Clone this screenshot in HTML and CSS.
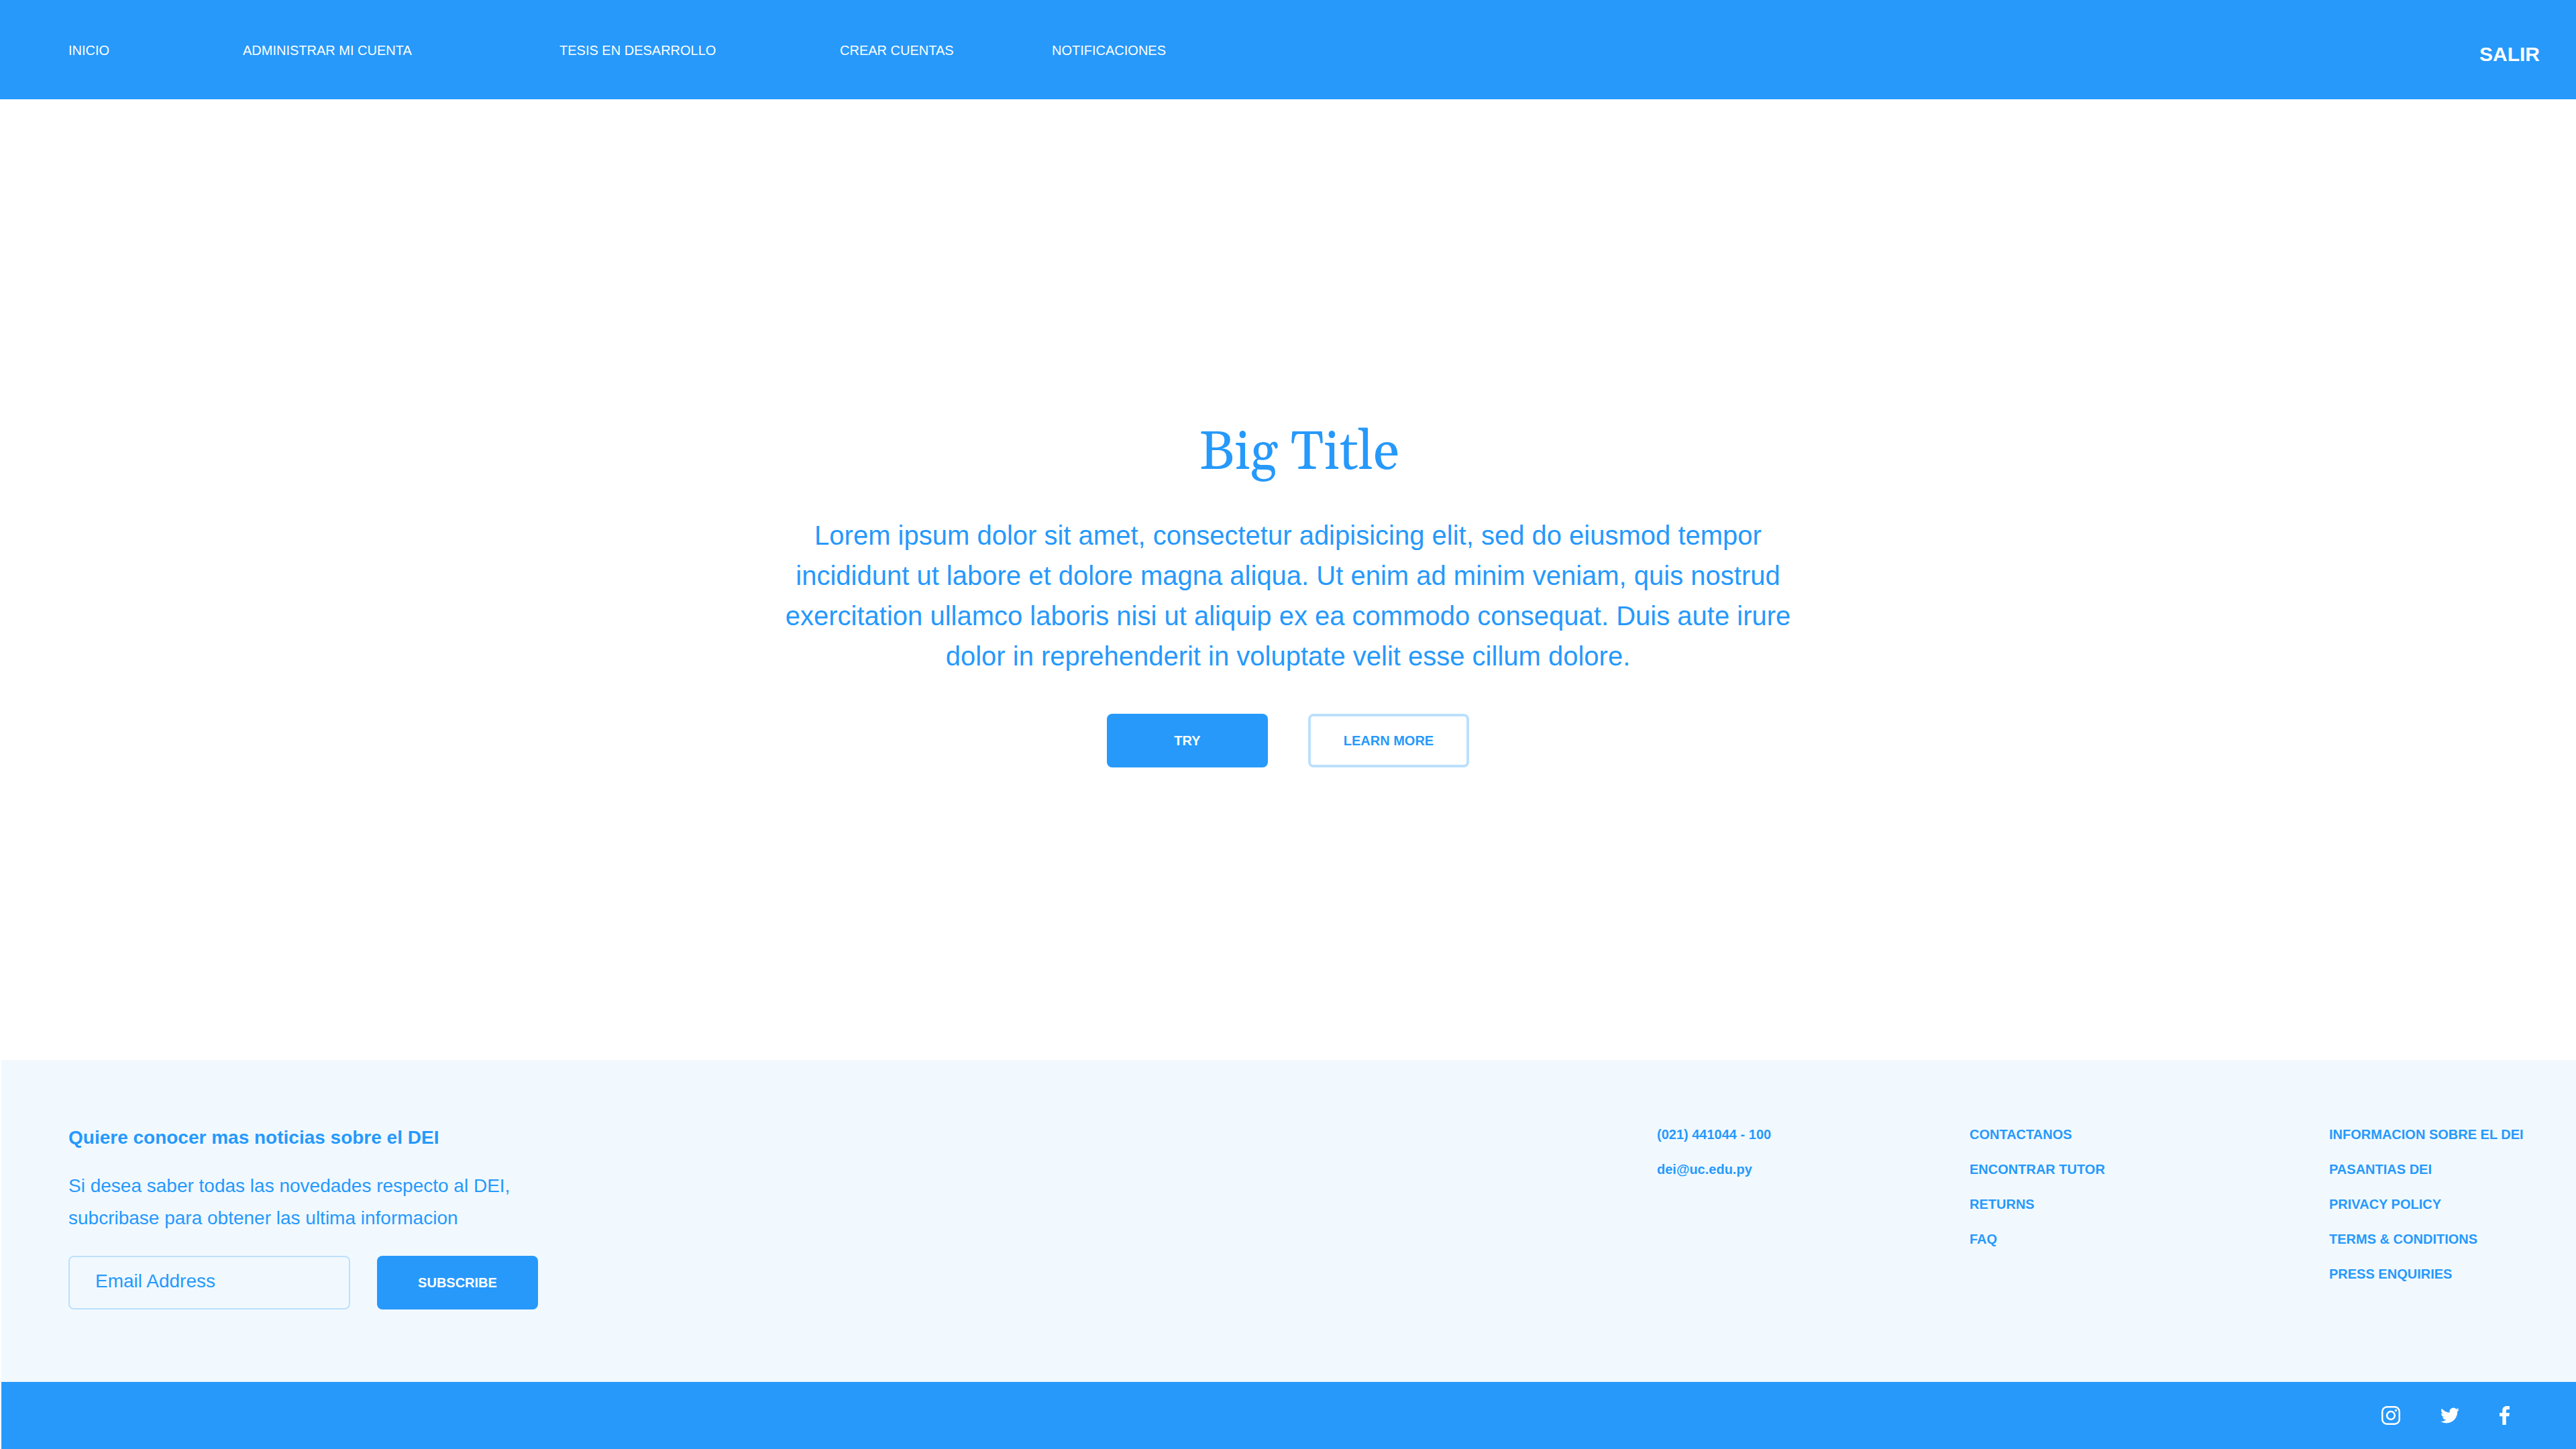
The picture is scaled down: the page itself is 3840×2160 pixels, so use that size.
FILE: index.html
```html
<!DOCTYPE html>
<html lang="es">
<head>
<meta charset="utf-8">
<meta name="viewport" content="width=device-width, initial-scale=1">
<title>DEI</title>
<link rel="stylesheet" href="styles.css">
</head>
<body>
<header class="header">
  <nav class="nav" aria-label="Principal">
    <a href="#">INICIO</a>
    <a href="#">ADMINISTRAR MI CUENTA</a>
    <a href="#">TESIS EN DESARROLLO</a>
    <a href="#">CREAR CUENTAS</a>
    <a href="#">NOTIFICACIONES</a>
  </nav>
  <a class="logout" href="#">SALIR</a>
</header>

<main class="hero">
  <h1 class="hero-title">Big Title</h1>
  <p class="hero-text">Lorem ipsum dolor sit amet, consectetur adipisicing elit, sed do eiusmod tempor incididunt ut labore et dolore magna aliqua. Ut enim ad minim veniam, quis nostrud exercitation ullamco laboris nisi ut aliquip ex ea commodo consequat. Duis aute irure dolor in reprehenderit in voluptate velit esse cillum dolore.</p>
  <div class="hero-actions">
    <button class="button" type="button">TRY</button>
    <button class="button button-outline" type="button">LEARN MORE</button>
  </div>
</main>

<footer class="footer">
  <div class="footer-main">
    <section class="newsletter">
      <h2 class="newsletter-title">Quiere conocer mas noticias sobre el DEI</h2>
      <p class="newsletter-text">Si desea saber todas las novedades respecto al DEI, subcribase para obtener las ultima informacion</p>
      <form class="newsletter-form">
        <input class="email" type="email" placeholder="Email Address" aria-label="Email Address">
        <button class="button" type="submit">SUBSCRIBE</button>
      </form>
    </section>
    <div class="links">
      <ul>
        <li><a href="tel:021441044">(021) 441044 - 100</a></li>
        <li><a href="mailto:dei@uc.edu.py">dei@uc.edu.py</a></li>
      </ul>
      <ul>
        <li><a href="#">CONTACTANOS</a></li>
        <li><a href="#">ENCONTRAR TUTOR</a></li>
        <li><a href="#">RETURNS</a></li>
        <li><a href="#">FAQ</a></li>
      </ul>
      <ul>
        <li><a href="#">INFORMACION SOBRE EL DEI</a></li>
        <li><a href="#">PASANTIAS DEI</a></li>
        <li><a href="#">PRIVACY POLICY</a></li>
        <li><a href="#">TERMS &amp; CONDITIONS</a></li>
        <li><a href="#">PRESS ENQUIRIES</a></li>
      </ul>
    </div>
  </div>
  <div class="social">
    <a href="#" aria-label="Instagram">
      <svg width="28" height="28" viewBox="0 0 28 28" fill="none" stroke="#fff">
        <rect x="1.25" y="1.25" width="25.5" height="25.5" rx="7" stroke-width="2.5"/>
        <circle cx="14" cy="14" r="5.9" stroke-width="2.5"/>
        <circle cx="21.5" cy="6.5" r="1.7" fill="#fff" stroke="none"/>
      </svg>
    </a>
    <a href="#" aria-label="Twitter">
      <svg width="28" height="28" viewBox="0 0 24 24" fill="#fff">
        <path d="M23.954 4.569a10 10 0 0 1-2.825.775 4.958 4.958 0 0 0 2.163-2.723c-.951.555-2.005.959-3.127 1.184a4.92 4.92 0 0 0-8.384 4.482C7.691 8.094 4.066 6.13 1.64 3.161a4.822 4.822 0 0 0-.666 2.475c0 1.71.87 3.213 2.188 4.096a4.904 4.904 0 0 1-2.228-.616v.061a4.923 4.923 0 0 0 3.946 4.827 4.996 4.996 0 0 1-2.212.085 4.937 4.937 0 0 0 4.604 3.417 9.868 9.868 0 0 1-6.102 2.105c-.39 0-.779-.023-1.17-.067a13.995 13.995 0 0 0 7.557 2.209c9.054 0 13.999-7.496 13.999-13.986 0-.209 0-.42-.015-.63a9.936 9.936 0 0 0 2.46-2.548z"/>
      </svg>
    </a>
    <a href="#" aria-label="Facebook">
      <svg width="16" height="28" viewBox="0 0 16 28" fill="#fff">
        <path d="M4.3 28V15.2H0V10.2H4.3V6.5C4.3 2.3 6.9 0 10.7 0H15V5H12.2C10.2 5 9.8 6 9.8 7.4V10.2H15L14.3 15.2H9.8V28Z"/>
      </svg>
    </a>
  </div>
</footer>
</body>
</html>
```

FILE: styles.css
```css
:root {
  --blue: #2699fb;
  --blue-light: #bce0fd;
  --blue-pale: #f1f9ff;
}

* {
  box-sizing: border-box;
}

body {
  display: flex;
  flex-direction: column;
  min-height: 100vh;
  margin: 0;
  background: #fff;
  color: var(--blue);
  font-family: "Liberation Sans", Arial, sans-serif;
  font-size: 20px;
  line-height: 24px;
}

a {
  color: inherit;
  text-decoration: none;
}

h1,
h2,
p,
ul {
  margin: 0;
  padding: 0;
}

ul {
  list-style: none;
}

.header {
  display: flex;
  justify-content: space-between;
  align-items: flex-start;
  padding: 63px 54px 49px 102px;
  background: var(--blue);
  color: #fff;
}

.nav {
  display: grid;
  grid-template-columns: 260px 472px 418px 316px auto;
}

.logout {
  font-size: 30px;
  font-weight: 700;
  line-height: 36px;
}

.hero {
  display: flex;
  flex: 1;
  flex-direction: column;
  align-items: center;
  justify-content: center;
}

.hero-title {
  padding: 32px 0 32px 34px;
  font-family: Georgia, Gelasio, "Noto Serif", serif;
  font-size: 80px;
  font-weight: 400;
  line-height: 120px;
}

.hero-text {
  max-width: 1520px;
  font-size: 40px;
  line-height: 60px;
  text-align: center;
}

.hero-actions {
  display: flex;
  gap: 60px;
  margin-top: 56px;
}

.button {
  width: 240px;
  height: 80px;
  padding: 0;
  border: 0;
  border-radius: 8px;
  background: var(--blue);
  color: #fff;
  font: inherit;
  font-weight: 700;
}

.button-outline {
  border: 4px solid var(--blue-light);
  background: #fff;
  color: var(--blue);
}

.footer {
  margin-left: 2px;
}

.footer-main {
  display: flex;
  justify-content: space-between;
  padding: 96px 76px 108px 100px;
  background: var(--blue-pale);
}

.newsletter {
  max-width: 700px;
}

.newsletter-title {
  font-size: 28px;
  line-height: 40px;
}

.newsletter-text {
  margin: 28px 0 32px;
  font-size: 28px;
  line-height: 48px;
}

.newsletter-form {
  display: flex;
  gap: 40px;
}

.email {
  width: 420px;
  height: 80px;
  padding: 0 38px 4px;
  border: 2px solid var(--blue-light);
  border-radius: 8px;
  background: transparent;
  color: var(--blue);
  font: inherit;
  font-size: 28px;
}

.email::placeholder {
  color: var(--blue);
  opacity: 1;
}

.links {
  display: grid;
  grid-template-columns: 466px 536px 292px;
  font-weight: 700;
}

.links ul {
  display: flex;
  flex-direction: column;
  gap: 28px;
  padding-top: 3px;
}

.social {
  display: flex;
  justify-content: flex-end;
  gap: 60px;
  padding: 36px 98px;
  background: var(--blue);
}

.social svg {
  display: block;
}
```
